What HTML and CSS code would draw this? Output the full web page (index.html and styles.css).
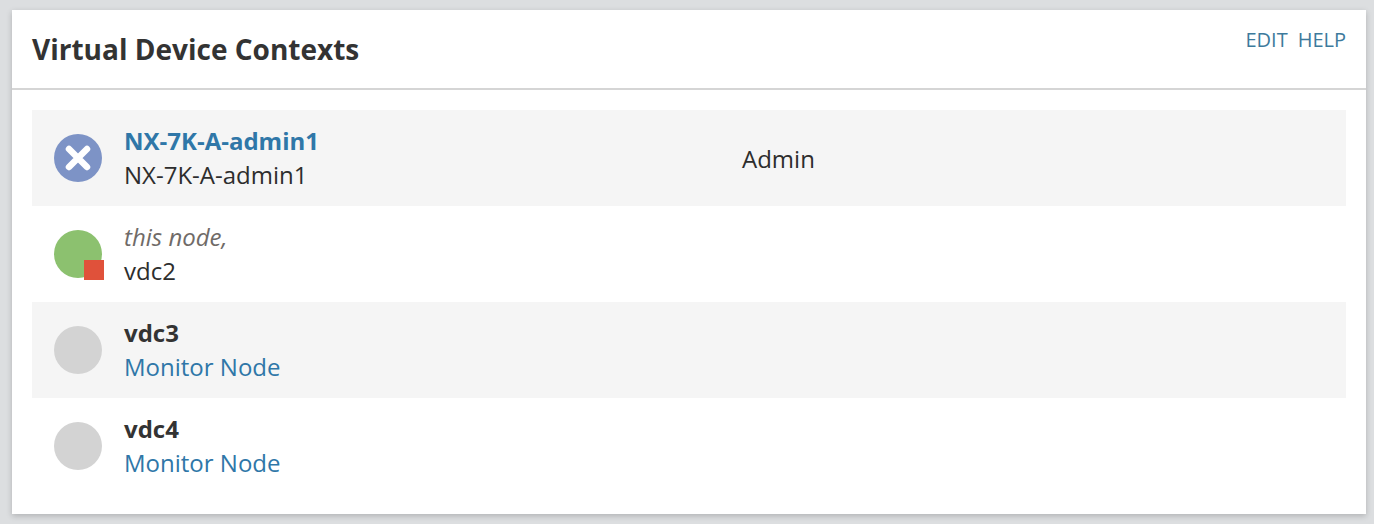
FILE: index.html
```html
<!DOCTYPE html>
<html lang="en">
<head>
    <meta charset="UTF-8">
    <title>Virtual Device Contexts</title>
    <link rel="stylesheet" href="styles.css">
</head>
<body>
    <div class="panel">
        <div class="panel-header">
            <h1>Virtual Device Contexts</h1>
            <div class="panel-actions">
                <a href="#">EDIT</a>
                <a href="#">HELP</a>
            </div>
        </div>
        <div class="panel-body">
            <div class="row">
                <div class="status status-admin">
                    <svg viewBox="0 0 48 48" width="48" height="48">
                        <path d="M15 15L33 33M33 15L15 33" stroke="#fff" stroke-width="6.5" stroke-linecap="round" fill="none"/>
                    </svg>
                </div>
                <div class="info">
                    <a class="name" href="#">NX-7K-A-admin1</a>
                    <span>NX-7K-A-admin1</span>
                </div>
                <div class="role">Admin</div>
            </div>
            <div class="row">
                <div class="status status-current"><span class="badge"></span></div>
                <div class="info">
                    <em>this node,</em>
                    <span>vdc2</span>
                </div>
            </div>
            <div class="row">
                <div class="status"></div>
                <div class="info">
                    <strong>vdc3</strong>
                    <a href="#">Monitor Node</a>
                </div>
            </div>
            <div class="row">
                <div class="status"></div>
                <div class="info">
                    <strong>vdc4</strong>
                    <a href="#">Monitor Node</a>
                </div>
            </div>
        </div>
    </div>
</body>
</html>
```

FILE: styles.css
```css
html, body {
    margin: 0;
    padding: 0;
}
body {
    background-color: #dcdee0;
    font-family: "Open Sans", sans-serif;
    font-size: 24px;
    color: #2d2d2d;
    padding: 10px 8px 10px 12px;
}
a {
    color: #2f77a8;
    text-decoration: none;
}
.panel {
    background: #fff;
    height: 504px;
    box-shadow: 0 2px 6px rgba(0,0,0,0.2);
}
.panel-header {
    height: 78px;
    border-bottom: 2px solid #d5d5d5;
    display: flex;
    justify-content: space-between;
    padding: 0 20px;
}
.panel-header h1 {
    margin: 20px 0 0;
    font-size: 28px;
    line-height: 38px;
    font-weight: 700;
    color: #333;
}
.panel-actions {
    display: flex;
    gap: 10px;
    margin-top: 17px;
    font-size: 20px;
    line-height: 26px;
}
.panel-actions a {
    color: #3d7a9c;
}
.panel-body {
    padding: 20px 20px 0;
}
.row {
    height: 96px;
    display: flex;
    align-items: center;
    padding-left: 22px;
}
.row:nth-child(odd) {
    background: #f5f5f5;
}
.status {
    position: relative;
    width: 48px;
    height: 48px;
    border-radius: 50%;
    background: #d3d3d3;
    flex-shrink: 0;
}
.status svg {
    display: block;
}
.status-admin {
    background: #7d93c6;
}
.status-current {
    background: #8cc16f;
}
.badge {
    position: absolute;
    right: -2px;
    bottom: -2px;
    width: 20px;
    height: 20px;
    background: #e0513a;
}
.info {
    display: flex;
    flex-direction: column;
    width: 618px;
    margin-left: 22px;
    line-height: 34px;
}
.info .name, .info strong {
    font-weight: 700;
}
.info strong {
    color: #333;
}
.info em {
    color: #706b68;
}
.role {
    color: #2d2d2d;
}
```
